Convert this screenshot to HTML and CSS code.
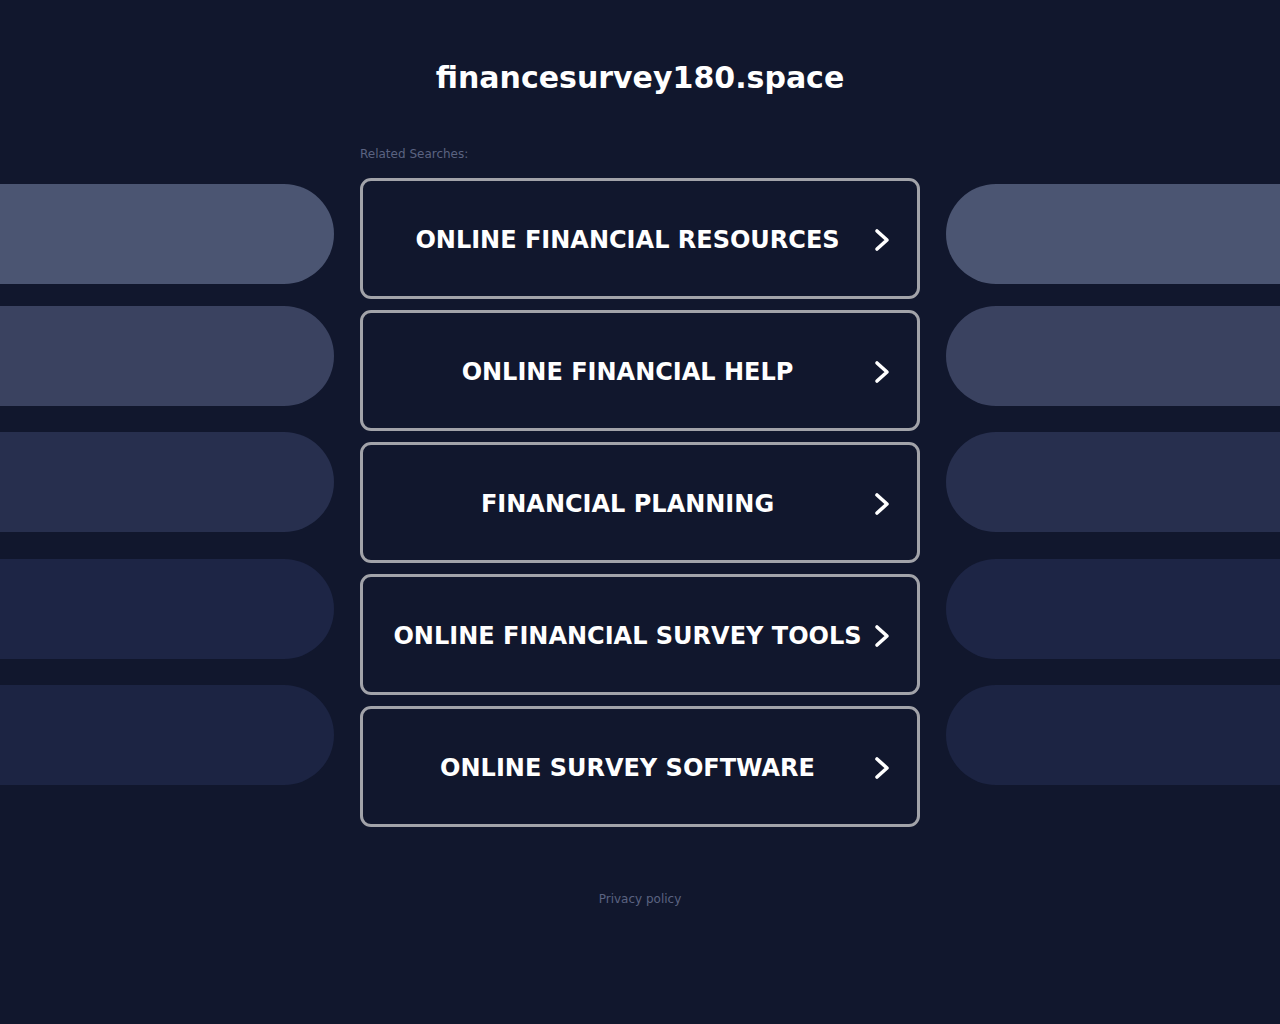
FILE: index.html
```html
<!DOCTYPE html>
<html lang="en">
<head>
<meta charset="utf-8">
<title>financesurvey180.space</title>
<link rel="stylesheet" href="styles.css">
</head>
<body>
<header class="header">
  <h1 class="domain">financesurvey180.space</h1>
</header>
<main class="layout">
  <div class="pills pills-left">
    <div class="pill p1"></div>
    <div class="pill p2"></div>
    <div class="pill p3"></div>
    <div class="pill p4"></div>
    <div class="pill p5"></div>
  </div>
  <section class="center">
    <div class="related">Related Searches:</div>
    <div class="links">
      <a class="link" href="#"><span class="label">ONLINE FINANCIAL RESOURCES</span><svg class="chev" viewBox="0 0 16 24" width="16" height="24"><path d="M3 3 L13 12 L3 21" fill="none" stroke="#fff" stroke-width="3.6" stroke-linecap="round" stroke-linejoin="round"/></svg></a>
      <a class="link" href="#"><span class="label">ONLINE FINANCIAL HELP</span><svg class="chev" viewBox="0 0 16 24" width="16" height="24"><path d="M3 3 L13 12 L3 21" fill="none" stroke="#fff" stroke-width="3.6" stroke-linecap="round" stroke-linejoin="round"/></svg></a>
      <a class="link" href="#"><span class="label">FINANCIAL PLANNING</span><svg class="chev" viewBox="0 0 16 24" width="16" height="24"><path d="M3 3 L13 12 L3 21" fill="none" stroke="#fff" stroke-width="3.6" stroke-linecap="round" stroke-linejoin="round"/></svg></a>
      <a class="link" href="#"><span class="label">ONLINE FINANCIAL SURVEY TOOLS</span><svg class="chev" viewBox="0 0 16 24" width="16" height="24"><path d="M3 3 L13 12 L3 21" fill="none" stroke="#fff" stroke-width="3.6" stroke-linecap="round" stroke-linejoin="round"/></svg></a>
      <a class="link" href="#"><span class="label">ONLINE SURVEY SOFTWARE</span><svg class="chev" viewBox="0 0 16 24" width="16" height="24"><path d="M3 3 L13 12 L3 21" fill="none" stroke="#fff" stroke-width="3.6" stroke-linecap="round" stroke-linejoin="round"/></svg></a>
    </div>
  </section>
  <div class="pills pills-right">
    <div class="pill p1"></div>
    <div class="pill p2"></div>
    <div class="pill p3"></div>
    <div class="pill p4"></div>
    <div class="pill p5"></div>
  </div>
</main>
<footer class="footer">
  <a class="privacy" href="#">Privacy policy</a>
</footer>
</body>
</html>
```
FILE: styles.css
```css
html, body {
  margin: 0;
  padding: 0;
  background: #11172d;
  font-family: "DejaVu Sans", "Liberation Sans", sans-serif;
  height: 100%;
}
.header {
  display: flex;
  justify-content: center;
  padding-top: 59px;
}
.domain {
  margin: 0;
  color: #ffffff;
  font-size: 30px;
  font-weight: bold;
  line-height: 38px;
}
.layout {
  display: grid;
  grid-template-columns: 334px 560px 334px;
  column-gap: 26px;
  justify-content: space-between;
  margin-top: 48px;
}
.pills {
  display: flex;
  flex-direction: column;
  padding-top: 39px;
}
.pill {
  height: 100px;
}
.pills-left .pill { border-radius: 0 50px 50px 0; }
.pills-right .pill { border-radius: 50px 0 0 50px; }
.pill.p2 { margin-top: 22px; }
.pill.p3 { margin-top: 26px; }
.pill.p4 { margin-top: 27px; }
.pill.p5 { margin-top: 26px; }
.p1 { background: #4b5572; }
.p2 { background: #3a4260; }
.p3 { background: #272f4e; }
.p4 { background: #1d2545; }
.p5 { background: #1c2443; }
.related {
  color: #5b6381;
  font-size: 12px;
  line-height: 14px;
  height: 14px;
  margin-top: 2px;
  margin-bottom: 17px;
}
.links {
  display: flex;
  flex-direction: column;
  gap: 11px;
}
.link {
  box-sizing: border-box;
  height: 121px;
  border: 3px solid #a2a3a9;
  border-radius: 11px;
  display: flex;
  align-items: center;
  justify-content: center;
  text-decoration: none;
  position: relative;
  padding-right: 25px;
  padding-top: 2px;
}
.label {
  color: #ffffff;
  font-size: 24px;
  font-weight: bold;
}
.chev {
  position: absolute;
  right: 27px;
  top: 50%;
  margin-top: -11px;
}
.footer {
  display: flex;
  justify-content: center;
  margin-top: 64px;
}
.privacy {
  color: #5b6381;
  font-size: 12px;
  text-decoration: none;
  line-height: 16px;
}
```
